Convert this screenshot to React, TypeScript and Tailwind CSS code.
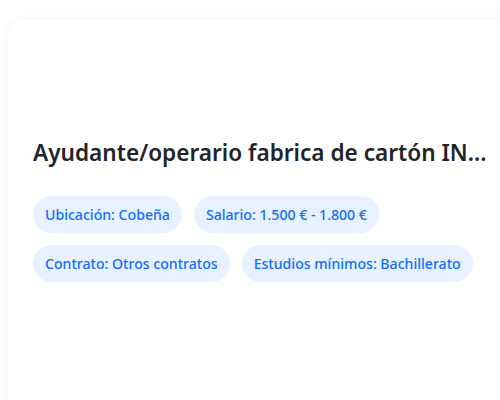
export default function App() {
  const tags = [
    "Ubicación: Cobeña",
    "Salario: 1.500 € - 1.800 €",
    "Contrato: Otros contratos",
    "Estudios mínimos: Bachillerato",
  ];

  return (
    <main
      className="h-[400px] w-[500px] overflow-hidden bg-white pl-2 pt-5"
      style={{ fontFamily: '"Noto Sans", "Open Sans", sans-serif' }}
    >
      <div className="h-[420px] w-[520px] rounded-2xl bg-white pl-[25px] pr-[38px] pt-[117px] shadow-[0_0_12px_rgba(0,0,0,0.05)]">
        <h2 className="truncate text-[22.6px] font-semibold leading-[32px] text-[#212529]">
          Ayudante/operario fabrica de cartón INDUSTRIAL
        </h2>

        <div className="mt-[27px] flex w-[451px] flex-wrap gap-3">
          {tags.map((tag) => (
            <span
              key={tag}
              className="rounded-full bg-[#e7f1ff] px-3 py-[8px] text-[14.1px] font-medium leading-[21px] text-[#0d6efd]"
            >
              {tag}
            </span>
          ))}
        </div>
      </div>
    </main>
  );
}
